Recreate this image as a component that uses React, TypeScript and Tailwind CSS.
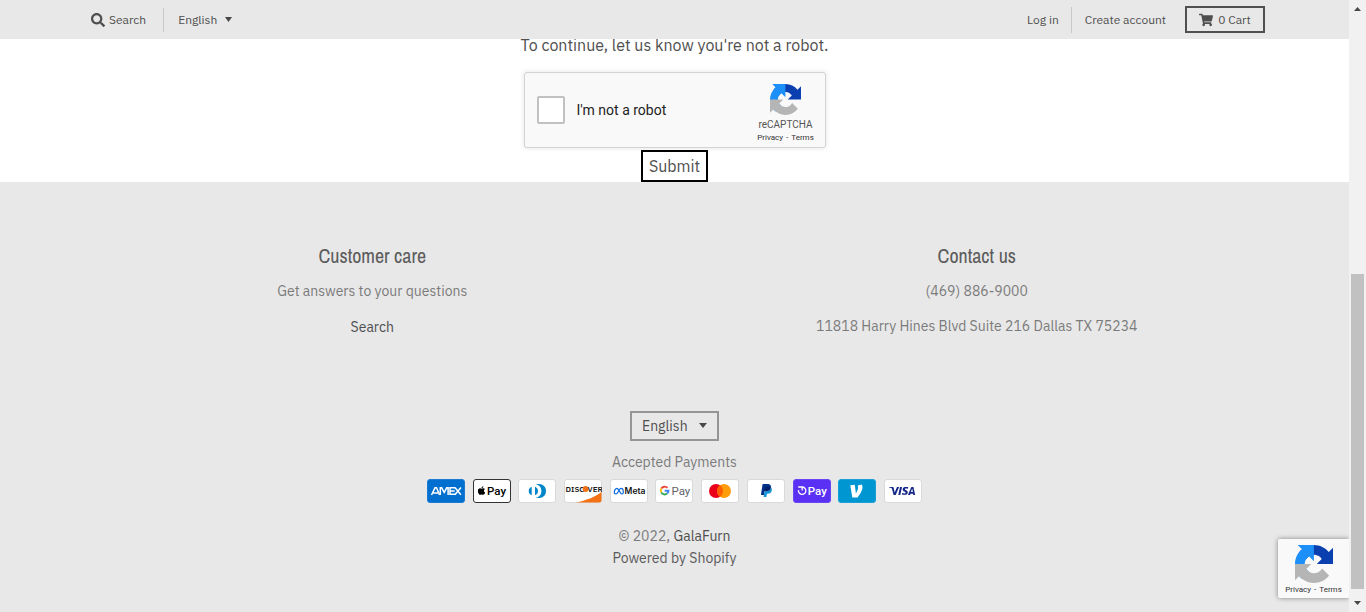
import React from "react";
import { FaApple, FaSearch, FaShoppingCart } from "react-icons/fa";

const uiFont = "font-['IBM_Plex_Sans','Roboto',sans-serif]";
const headingFont = "font-['Archivo_Narrow','Liberation_Sans_Narrow','Liberation_Sans',sans-serif]";

function RecaptchaLogo({ className }: { className: string }) {
  return (
    <svg viewBox="0 0 64 64" className={className} aria-hidden="true">
      <path
        fill="#0a3fb0"
        d="m64 31.955-.033-1.37V4.687l-7.16 7.16C50.948 4.674 42.033.093 32.05.093c-10.389 0-19.622 4.96-25.458 12.64l11.736 11.86a15.55 15.55 0 0 1 4.754-5.334c2.05-1.6 4.952-2.906 8.968-2.906.485 0 .86.057 1.135.163 4.976.393 9.288 3.14 11.828 7.124l-8.307 8.307L64 31.953"
      />
      <path
        fill="#1c8ff8"
        d="m31.862.094-1.37.033H4.594l7.16 7.16C4.58 13.146 0 22.06 0 32.045c0 10.389 4.96 19.622 12.64 25.458L24.5 45.768a15.55 15.55 0 0 1-5.334-4.754c-1.6-2.05-2.906-4.952-2.906-8.968 0-.485.057-.86.163-1.135.393-4.976 3.14-9.288 7.124-11.828l8.307 8.307L31.86.095"
      />
      <path
        fill="#b5b5b5"
        d="M.001 32.045l.033 1.37v25.898l7.16-7.16c5.86 7.173 14.774 11.754 24.758 11.754 10.389 0 19.622-4.96 25.458-12.64l-11.736-11.86a15.55 15.55 0 0 1-4.754 5.334c-2.05 1.6-4.952 2.906-8.968 2.906-.485 0-.86-.057-1.135-.163-4.976-.393-9.288-3.14-11.828-7.124l8.307-8.307c-10.522.04-22.4.066-27.295-.005"
      />
    </svg>
  );
}

function Caret({ className }: { className: string }) {
  return (
    <svg viewBox="0 0 8 6" preserveAspectRatio="none" className={className} aria-hidden="true">
      <path d="M0 0h8L4 6z" fill="#484848" />
    </svg>
  );
}

function PrivacyTerms() {
  return (
    <div className="flex gap-[3px] font-['Roboto',sans-serif] text-[8px] leading-[10px] whitespace-nowrap text-[#333]">
      <a href="#privacy">Privacy</a>
      <span>-</span>
      <a href="#terms">Terms</a>
    </div>
  );
}

function Card({
  name,
  fill = "#fff",
  stroke = "#d9d9d9",
  children,
}: {
  name: string;
  fill?: string;
  stroke?: string;
  children: React.ReactNode;
}) {
  return (
    <li>
      <svg viewBox="0 0 38 24" className="block h-6 w-[38px]" role="img" aria-label={name}>
        <rect x=".5" y=".5" width="37" height="23" rx="2.5" fill={fill} stroke={stroke} />
        {children}
      </svg>
    </li>
  );
}

function Payments() {
  return (
    <ul className="mt-1.5 flex w-full max-w-[495px] justify-between">
      <Card name="American Express" fill="#006fcf" stroke="#1a7dd3">
        <g fill="none" stroke="#fff" strokeWidth="1.5">
          <path d="M4.500 16 8 8.800h1.500L12.600 16M6.300 13.900h4.700" />
          <path d="M13.300 16V8.800h1.400l2.500 4.700 2.500-4.700h1.400V16" />
          <path d="M28 8.800h-5V15.300h5M23 12h4.700" />
          <path d="m27.900 8.500 6 7.300M33.900 8.500l-6 7.300" />
        </g>
      </Card>
      <Card name="Apple Pay" stroke="#333">
        <svg x="4.500" y="6.500" width="8.500" height="10" viewBox="0 0 8.500 10">
          <FaApple width="8.500" height="10" className="h-2.5 w-2" color="#000" />
        </svg>
        <text x="14" y="16" fontSize="11.500" fontWeight="500" fontFamily="Roboto, sans-serif" fill="#000">
          Pay
        </text>
      </Card>
      <Card name="Diners Club">
        <path d="M18 5h3.200c3.800 0 6.800 3.100 6.800 7s-3 7-6.800 7H18z" fill="#0086c8" />
        <circle cx="16.500" cy="12" r="7" fill="#fff" />
        <path d="M13.700 7.700v8.600a4.600 4.600 0 0 1 0-8.600zM17 7.700v8.600a4.600 4.600 0 0 0 0-8.600z" fill="#0086c8" />
      </Card>
      <Card name="Discover">
        <path d="M37.500 13v8a2.500 2.500 0 0 1-2.500 2.500H12C22 21.500 31 18 37.500 13z" fill="#f47216" />
        <text x="1.500" y="12.800" fontSize="8" fontWeight="600" fontFamily="IBM Plex Sans, sans-serif" fill="#1a1a1a">
          DISC
        </text>
        <circle cx="21.600" cy="10" r="2.900" fill="#f47216" />
        <text x="23.600" y="12.800" fontSize="8" fontWeight="600" fontFamily="IBM Plex Sans, sans-serif" fill="#1a1a1a">
          VER
        </text>
      </Card>
      <Card name="Meta Pay">
        <path
          d="M4.300 13.600c0-2.200 1.200-4.200 2.600-4.200 2.200 0 2.900 5.600 5 5.600 1 0 1.400-.8 1.400-1.800 0-2.100-1-3.800-2.300-3.800-2 0-2.700 5.600-5.100 5.600-.9 0-1.600-.5-1.600-1.400z"
          fill="none"
          stroke="#0668e1"
          strokeWidth="1.200"
        />
        <text x="14.600" y="15.100" fontSize="8.500" fontWeight="600" fontFamily="Inter, sans-serif" fill="#111">
          Meta
        </text>
      </Card>
      <Card name="Google Pay">
        <g fill="none" strokeWidth="1.900">
          <path d="M12.500 8.900A3.900 3.900 0 0 0 6.300 9.600" stroke="#ea4335" />
          <path d="M6.300 9.600a3.900 3.900 0 0 0 0 4" stroke="#fbbc04" />
          <path d="M6.300 13.600a3.900 3.900 0 0 0 6 .8" stroke="#34a853" />
          <path d="M12.300 14.400a3.900 3.900 0 0 0 1.200-2.700H9.700" stroke="#4285f4" />
        </g>
        <text x="16.500" y="15.800" fontSize="11.500" fontFamily="Roboto, sans-serif" fill="#5f6368">
          Pay
        </text>
      </Card>
      <Card name="Mastercard">
        <circle cx="15" cy="12" r="7" fill="#eb001b" />
        <circle cx="23" cy="12" r="7" fill="#ff9d0a" />
        <path fill="#ff5f00" d="M22 12c0-2.400-1.200-4.500-3-5.700-1.800 1.300-3 3.400-3 5.700s1.200 4.500 3 5.700c1.800-1.200 3-3.300 3-5.700z" />
      </Card>
      <Card name="PayPal">
        <path fill="#003087" d="M23.900 8.300c.2-1 0-1.700-.6-2.300-.6-.7-1.700-1-3.100-1h-4.100c-.3 0-.5.2-.6.5L14 15.600c0 .2.1.4.3.4H17l.4-3.400 1.800-2.200 4.700-2.100z" />
        <path
          fill="#1a94d8"
          d="m23.900 8.300-.2.2c-.5 2.800-2.200 3.800-4.600 3.800H18c-.3 0-.5.2-.6.5l-.6 3.900-.2 1c0 .2.1.4.3.4H19c.3 0 .5-.2.5-.4v-.1l.4-2.400v-.1c0-.2.3-.4.5-.4h.3c2.100 0 3.700-.8 4.100-3.200.2-1 .1-1.800-.4-2.400-.1-.5-.3-.7-.5-.8z"
        />
        <path
          fill="#012169"
          d="M23.300 8.100c-.1-.1-.2-.1-.3-.1-.1 0-.2 0-.3-.1-.3-.1-.7-.1-1.100-.1h-3c-.1 0-.2 0-.2.1-.2.1-.3.2-.3.4l-.7 4.400v.1c0-.3.3-.5.6-.5h1.300c2.500 0 4.100-1 4.600-3.800v-.2c-.1-.1-.3-.2-.5-.2h-.1z"
        />
      </Card>
      <Card name="Shop Pay" fill="#5a31f4" stroke="#6a46f4">
        <path d="M5.200 8h4a3.700 3.700 0 1 1-3.700 3.100M9.200 8v3.600" fill="none" stroke="#fff" strokeWidth="1.300" />
        <text x="14.800" y="15.600" fontSize="11.500" fontWeight="500" fontFamily="Roboto, sans-serif" fill="#fff">
          Pay
        </text>
      </Card>
      <Card name="Venmo" fill="#0096d2" stroke="#1a9fd6">
        <path d="M23.800 5.600c.4.800.7 1.600.7 2.600 0 3.200-2.700 7.300-4.900 10.200h-5.300L12.300 6.300l4.500-.5 1.100 8.800c1-1.700 2.200-4.200 2.200-6 0-1-.2-1.700-.4-2.200l4.100-.8z" fill="#fff" />
      </Card>
      <Card name="Visa">
        <path
          d="M28.300 10.100H28c-.4 1-.7 1.500-1 3h1.900c-.3-1.500-.3-2.200-.6-3zm2.900 5.900h-1.700c-.1 0-.1 0-.2-.1l-.2-.9-.1-.2h-2.400c-.1 0-.2 0-.2.2l-.3.9c0 .1-.1.1-.1.1h-2.100l.2-.5L27 8.700c0-.5.3-.7.8-.7h1.500c.1 0 .2 0 .2.2l1.400 6.500c.1.4.2.7.2 1.100.1.1.1.1.1.200zm-13.400-.3.4-1.800c.1 0 .2.1.2.1.700.3 1.400.5 2.100.4.2 0 .5-.1.7-.2.5-.2.5-.7.1-1.100-.2-.2-.5-.3-.8-.5-.4-.2-.8-.4-1.100-.7-1.200-1-.8-2.400-.1-3.100.6-.4.9-.8 1.700-.8 1.200 0 2.500 0 3.100.2h.1c-.1.6-.2 1.100-.4 1.700-.5-.2-1-.4-1.500-.4-.3 0-.6 0-.9.1-.2 0-.3.1-.4.2-.2.2-.2.5 0 .7l.5.4c.4.2.8.4 1.100.6.5.3 1 .8 1.100 1.400.2.9-.1 1.700-.9 2.300-.5.4-.7.6-1.400.6-1.400 0-2.500.1-3.400-.2-.1.2-.1.2-.2.100zm-3.500.3c.1-.7.1-.7.2-1 .5-2.200 1-4.500 1.400-6.700.1-.2.1-.3.3-.3H18c-.2 1.200-.4 2.100-.7 3.200-.3 1.500-.6 3-1 4.500 0 .2-.1.2-.3.2M5 8.200c0-.1.200-.2.300-.2h3.400c.5 0 .9.3 1 .8l.9 4.400c0 .1 0 .1.1.2 0-.1.1-.1.1-.1l2.100-5.100c-.1-.1 0-.2.1-.2h2.100c0 .1 0 .1-.1.2l-3.100 7.300c-.1.2-.1.3-.2.4-.1.1-.3 0-.5 0H9.700c-.1 0-.2 0-.2-.2L7.900 9.500c-.2-.2-.5-.5-.9-.6-.6-.3-1.700-.5-1.900-.5L5 8.200z"
          fill="#142688"
        />
      </Card>
    </ul>
  );
}

function Header() {
  return (
    <header className="relative z-10 flex h-[39px] items-center justify-between bg-[#e8e8e8] pr-[84px] pl-[91px] text-xs text-[#4f4f4f]">
      <div className="flex items-center">
        <a href="#search" className="flex items-center gap-1">
          <FaSearch className="size-3.5" />
          Search
        </a>
        <div className="relative ml-[17px] border-l border-[#c8c8c8] py-1 pl-3.5">
          <select aria-label="Language" defaultValue="English" className="block appearance-none bg-transparent pr-3.5 leading-4">
            <option>English</option>
          </select>
          <Caret className="pointer-events-none absolute top-[9px] right-0 h-[5px] w-[7px]" />
        </div>
      </div>
      <nav className="flex items-center">
        <a href="#login" className="border-r border-[#c8c8c8] py-[5px] pr-3 leading-4">
          Log in
        </a>
        <a href="#register" className="pr-[19px] pl-[13px]">
          Create account
        </a>
        <a href="#cart" className="flex h-[27px] w-20 items-center justify-center gap-[5px] border-2 border-[#505050]">
          <FaShoppingCart className="size-3.5" />
          0 Cart
        </a>
      </nav>
    </header>
  );
}

function Challenge() {
  return (
    <form className="-mt-1.5 flex flex-col items-center text-base text-[#4f4f4f]" onSubmit={(e) => e.preventDefault()}>
      <p className="leading-6">To continue, let us know you're not a robot.</p>
      <div className="mt-[15px] flex h-[76px] w-[302px] items-center rounded-[3px] border border-[#d3d3d3] bg-[#f9f9f9] pr-2.5 pl-3 shadow-[0_0_4px_1px_rgba(0,0,0,0.08)]">
        <input id="robot" type="checkbox" className="size-7 appearance-none rounded-xs border-2 border-[#c1c1c1] bg-white" />
        <label htmlFor="robot" className="flex-1 pl-3 font-['Roboto',sans-serif] text-sm text-[#222]">
          I'm not a robot
        </label>
        <div className="flex w-[58px] flex-col items-center pt-1.5">
          <RecaptchaLogo className="size-[31px]" />
          <div className="mt-1 mb-0.5 font-['Roboto',sans-serif] text-[10px] leading-3 text-[#555]">reCAPTCHA</div>
          <PrivacyTerms />
        </div>
      </div>
      <button type="submit" className="mt-0.5 h-8 border-2 border-black bg-white px-1.5 leading-6">
        Submit
      </button>
    </form>
  );
}

function Footer() {
  return (
    <footer className="flex flex-1 flex-col items-center bg-[#e8e8e8] px-[70px] pt-[60px] text-center text-sm leading-[22px] text-[#7b7b7b]">
      <div className="grid w-full grid-cols-2">
        <section>
          <h2 className={`${headingFont} text-xl leading-7 text-[#5c5c5c]`}>Customer care</h2>
          <p className="mt-2.5">Get answers to your questions</p>
          <p className="mt-3.5">
            <a href="#search" className="text-[#4f4f4f]">Search</a>
          </p>
        </section>
        <section>
          <h2 className={`${headingFont} text-xl leading-7 text-[#5c5c5c]`}>Contact us</h2>
          <p className="mt-2.5">(469) 886-9000</p>
          <p className="mt-[13px]">11818 Harry Hines Blvd Suite 216 Dallas TX 75234</p>
        </section>
      </div>
      <div className="relative mt-[73px]">
        <select aria-label="Store language" defaultValue="English" className="block h-[30px] appearance-none border-2 border-[#959595] bg-transparent pr-[29px] pl-2.5 text-[#4f4f4f]">
          <option>English</option>
        </select>
        <Caret className="pointer-events-none absolute top-3 right-3 h-[5px] w-2" />
      </div>
      <p className="mt-2.5">Accepted Payments</p>
      <Payments />
      <p className="mt-[22px]">
        © 2022, <a href="#home" className="text-[#4f4f4f]">GalaFurn</a>
      </p>
      <p>
        <a href="#shopify" className="text-[#5a5a5a]">Powered by Shopify</a>
      </p>
    </footer>
  );
}

function ScrollTrack() {
  return (
    <div className="flex w-[17px] flex-col items-center bg-[#f1f1f1]" aria-hidden="true">
      <Caret className="mt-[7px] h-1 w-[7px] rotate-180" />
      <div className="flex w-full flex-1 flex-col px-0.5 pt-[6px]">
        <div className="flex-[257]" />
        <div className="flex-[314] bg-[#c1c1c1]" />
        <div className="flex-[12]" />
      </div>
      <Caret className="mb-[7px] h-1 w-[7px]" />
    </div>
  );
}

export default function App() {
  return (
    <div className={`${uiFont} flex min-h-screen bg-white`}>
      <div className="relative flex min-w-0 flex-1 flex-col overflow-hidden">
        <Header />
        <main>
          <Challenge />
        </main>
        <Footer />
        <aside className="absolute right-0 bottom-3.5 flex w-[71px] flex-col items-center rounded-l-xs bg-[#f9f9f9] pt-1.5 pb-[3px] shadow-[0_0_5px_gray]">
          <RecaptchaLogo className="mb-0.5 size-[38px]" />
          <PrivacyTerms />
        </aside>
      </div>
      <ScrollTrack />
    </div>
  );
}
